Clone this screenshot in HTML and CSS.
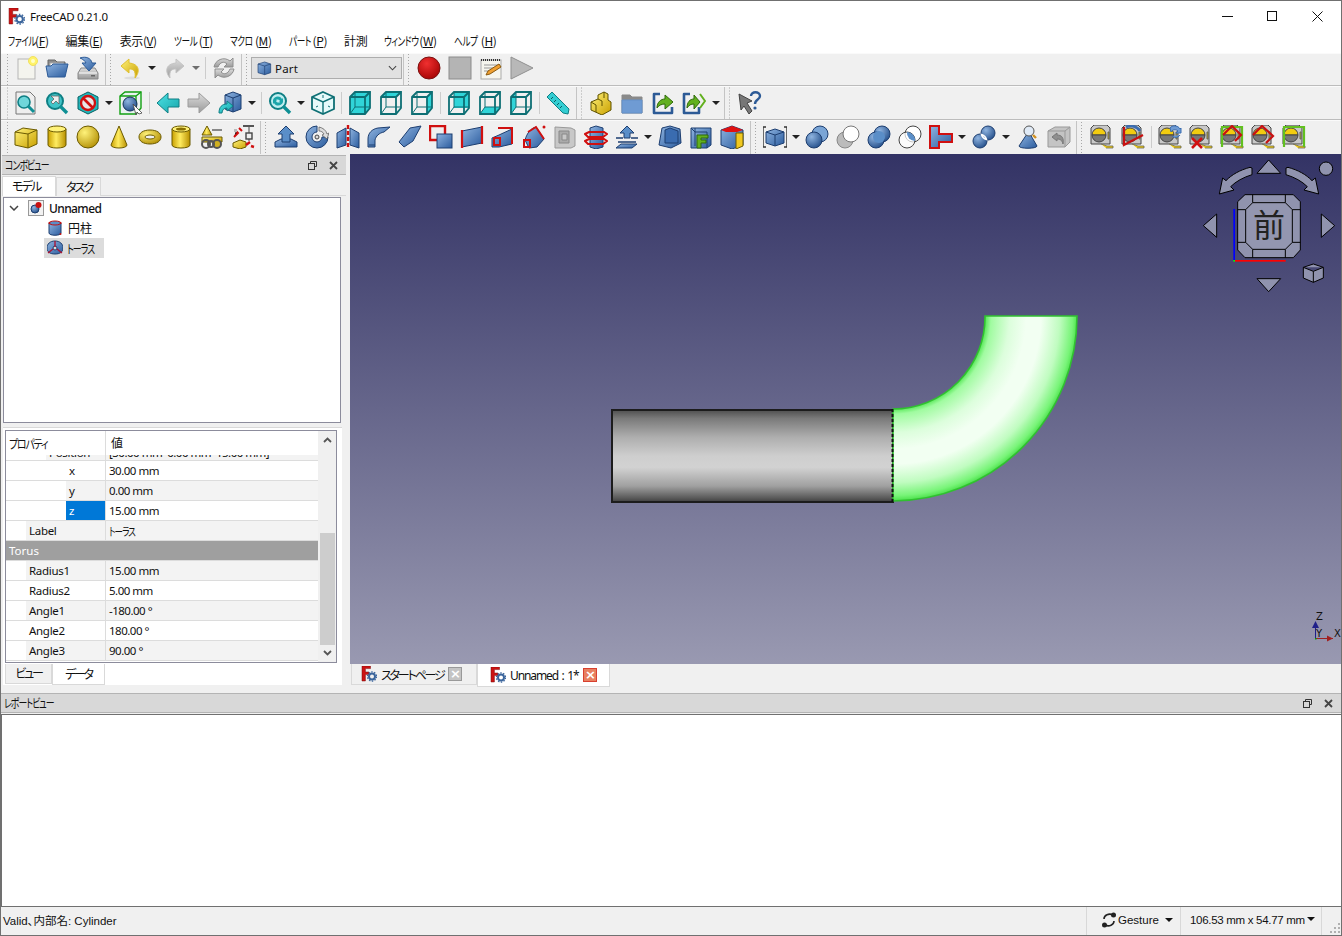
FILE: index.html
```html
<!DOCTYPE html>
<html lang="ja">
<head>
<meta charset="utf-8">
<title>FreeCAD 0.21.0</title>
<link rel="stylesheet" href="styles.css">
</head>
<body>
<svg class="defs" width="0" height="0" aria-hidden="true">
<defs>
<linearGradient id="y" x1="0" y1="0" x2="1" y2="1"><stop offset="0" stop-color="#fff27a"/><stop offset="1" stop-color="#c9a000"/></linearGradient>
<linearGradient id="yc" x1="0" y1="0" x2="1" y2="0"><stop offset="0" stop-color="#c9a000"/><stop offset=".45" stop-color="#ffec60"/><stop offset="1" stop-color="#b89000"/></linearGradient>
<linearGradient id="b" x1="0" y1="0" x2="1" y2="1"><stop offset="0" stop-color="#8fb4e0"/><stop offset="1" stop-color="#2b5c9e"/></linearGradient>
<linearGradient id="t" x1="0" y1="0" x2="1" y2="1"><stop offset="0" stop-color="#4fe3e6"/><stop offset="1" stop-color="#16a5aa"/></linearGradient>
<linearGradient id="g" x1="0" y1="0" x2="0" y2="1"><stop offset="0" stop-color="#dcdcdc"/><stop offset="1" stop-color="#9a9a9a"/></linearGradient>
<radialGradient id="rs" cx=".35" cy=".3" r=".8"><stop offset="0" stop-color="#fff27a"/><stop offset="1" stop-color="#b08c00"/></radialGradient>
<radialGradient id="rr" cx=".4" cy=".3" r=".8"><stop offset="0" stop-color="#f03030"/><stop offset="1" stop-color="#a00000"/></radialGradient>
<radialGradient id="rb" cx=".35" cy=".3" r=".8"><stop offset="0" stop-color="#8fb4e0"/><stop offset="1" stop-color="#1f4a86"/></radialGradient>
<linearGradient id="cyl" gradientUnits="userSpaceOnUse" x1="0" y1="409" x2="0" y2="503"><stop offset="0" stop-color="#4a4a4a"/><stop offset=".1" stop-color="#7a7a7a"/><stop offset=".3" stop-color="#aeaeae"/><stop offset=".5" stop-color="#cecece"/><stop offset=".62" stop-color="#d2d2d2"/><stop offset=".82" stop-color="#a0a0a0"/><stop offset=".95" stop-color="#585858"/><stop offset="1" stop-color="#383838"/></linearGradient>
<radialGradient id="tor" gradientUnits="userSpaceOnUse" cx="893" cy="316" r="185"><stop offset=".5" stop-color="#58e858"/><stop offset=".53" stop-color="#a0fba0"/><stop offset=".63" stop-color="#dcfedc"/><stop offset=".72" stop-color="#f2fff2"/><stop offset=".8" stop-color="#f2fff2"/><stop offset=".9" stop-color="#c0fcc0"/><stop offset=".97" stop-color="#78f478"/><stop offset="1" stop-color="#48e048"/></radialGradient>

<symbol id="new" viewBox="0 0 24 24"><rect x="4" y="3" width="17" height="20" fill="#f4f4ee" stroke="#b5b5b5"/><circle cx="19" cy="5" r="4.5" fill="#fff36a" stroke="#f0e060"/><circle cx="19" cy="5" r="2" fill="#ffffc8"/></symbol>
<symbol id="open" viewBox="0 0 24 24"><path d="M3 4h7l2 2h8v6H3z" fill="#8d8d8d" stroke="#666"/><path d="M5 7h14v7H5z" fill="#fff" stroke="#aaa"/><path d="M3 21 1 10h5l2-2h15l-3 13z" fill="url(#b)" stroke="#2c5a96"/></symbol>
<symbol id="save" viewBox="0 0 24 24"><path d="M5 12h14l3 5v6H2v-6z" fill="url(#g)" stroke="#888"/><path d="M3 17h18" stroke="#fff"/><rect x="15" y="19" width="4" height="1.5" fill="#666"/><path d="M4 2c6-2 11 0 12 5h4l-7 8-7-8h4c-1-2-3-4-6-5z" fill="url(#b)" stroke="#2c5a96"/></symbol>
<symbol id="undo" viewBox="0 0 24 24"><ellipse cx="13" cy="22" rx="8" ry="1.5" fill="#ddd"/><path d="M10 3 2 10l8 7v-4c4 0 7 1 6 9 5-6 5-14-6-15z" fill="url(#y)" stroke="#e0c030"/></symbol>
<symbol id="redo" viewBox="0 0 24 24"><path d="M14 3 22 10l-8 7v-4c-4 0-7 1-6 9-5-6-5-14 6-15z" fill="url(#g)" stroke="#c4c4c4"/></symbol>
<symbol id="refresh" viewBox="0 0 24 24"><path d="M2 11C3 4 12 0 18 5l3-3v9h-9l3-3c-3-3-7-2-9 3z" fill="url(#g)" stroke="#8e8e8e"/><path d="M22 13c-1 7-10 11-16 6l-3 3v-9h9l-3 3c3 3 7 2 9-3z" fill="url(#g)" stroke="#8e8e8e"/></symbol>
<symbol id="rec" viewBox="0 0 24 24"><circle cx="12" cy="12" r="11" fill="url(#rr)" stroke="#7a1010"/></symbol>
<symbol id="stop" viewBox="0 0 24 24"><rect x="1" y="1" width="22" height="22" fill="#b4b4b4" stroke="#8c8c8c"/></symbol>
<symbol id="edit" viewBox="0 0 24 24"><rect x="2" y="4" width="20" height="19" fill="#f6f6ee" stroke="#aaa"/><path d="M2 4h20" stroke="#333" stroke-width="2" stroke-dasharray="1 1"/><path d="M5 9h14M5 12h9M5 15h6" stroke="#999"/><path d="m7 19 2-4L20 8l2 3-11 7z" fill="#f0a030" stroke="#8a5a10"/></symbol>
<symbol id="play" viewBox="0 0 24 24"><path d="M1 1 23 12 1 23z" fill="#b8b8b8" stroke="#909090"/></symbol>
<symbol id="part" viewBox="0 0 24 24"><path d="M3 6 13 3l9 3v13l-9 3-10-3z" fill="url(#b)" stroke="#1d3e70"/><path d="M3 6l10 3 9-3M13 9v13" fill="none" stroke="#1d3e70"/></symbol>

<symbol id="fitall" viewBox="0 0 24 24"><path d="M2 1h14l5 5v17H2z" fill="#eee" stroke="#777"/><circle cx="10" cy="11" r="6" fill="#6fd6da" stroke="#0e7f84" stroke-width="1.6"/><path d="m14 15 6 6" stroke="#0e8f94" stroke-width="3"/></symbol>
<symbol id="fitsel" viewBox="0 0 24 24"><circle cx="10" cy="10" r="8" fill="#40c4c8" stroke="#0e7f84" stroke-width="2"/><path d="m15 15 7 7" stroke="#0e8f94" stroke-width="3.4"/><path d="M6 5h8v8l-3-3-3 3-2-2 3-3z" fill="#eee" stroke="#555" stroke-width=".7"/></symbol>
<symbol id="draw" viewBox="0 0 24 24"><path d="M12 1 22 6v12l-10 5-10-5V6z" fill="#20b8bc" stroke="#0b5f62"/><circle cx="12" cy="12" r="7" fill="#e8e8e8" stroke="#d01010" stroke-width="2.4"/><path d="m7 7 10 10" stroke="#d01010" stroke-width="2.6"/></symbol>
<symbol id="bbox" viewBox="0 0 24 24"><path d="M1 5 6 1h16v16l-5 6H1z" fill="#cfe" fill-opacity=".2" stroke="#12a012" stroke-width="1.4"/><path d="M1 5h16v18M17 5l5-4" fill="none" stroke="#12a012" stroke-width="1.4"/><circle cx="11" cy="13" r="7" fill="url(#rb)" stroke="#16305a"/><path d="m14 13 9 9-3 1-2-2-1 3z" fill="#fff" stroke="#444" stroke-width=".8"/></symbol>
<symbol id="back" viewBox="0 0 24 24"><path d="M1 12 12 2v6h11v8H12v6z" fill="url(#t)" stroke="#0e7f84"/></symbol>
<symbol id="fwd" viewBox="0 0 24 24"><path d="M23 12 12 2v6H1v8h11v6z" fill="url(#g)" stroke="#9c9c9c"/></symbol>
<symbol id="boxarrow" viewBox="0 0 24 24"><path d="M7 4 15 1l8 3v14l-8 3-8-3z" fill="url(#b)" stroke="#1d3e70"/><path d="m7 4 8 3 8-3M15 7v14" fill="none" stroke="#1d3e70"/><path d="M1 22c0-6 3-9 8-9v-3l6 5-6 5v-3c-3 0-5 2-5 5z" fill="url(#t)" stroke="#0e7f84"/></symbol>
<symbol id="sync" viewBox="0 0 24 24"><circle cx="10" cy="10" r="8" fill="#bfeef0" stroke="#0e7f84" stroke-width="2"/><path d="m15 15 7 7" stroke="#0e8f94" stroke-width="3.4"/><path d="M5 9c1-4 7-5 9-1l1-1v4h-4l1-1c-1-2-4-2-5 0zM15 11c-1 4-7 5-9 1l-1 1V9h4l-1 1c1 2 4 2 5 0z" fill="#1ba5aa"/></symbol>
<symbol id="iso" viewBox="0 0 24 24"><path d="M12 1 23 6v12l-11 5-11-5V6z" fill="#e6fafa" stroke="#0e6f74" stroke-width="1.8"/><path d="m1 6 11 5 11-5M12 11v12" fill="none" stroke="#0e6f74" stroke-width="1.4"/><path d="M12 4v3M5 16l2-1M19 16l-2-1" stroke="#0e6f74"/></symbol>
<g id="wire"><path d="M2 6 7 1h15v16l-5 6H2z" fill="none" stroke="#0e6f74" stroke-width="1.8"/><path d="M2 6h15v17M17 6l5-5" fill="none" stroke="#0e6f74" stroke-width="1.8"/><path d="M7 1v15H22M7 16l-5 7" fill="none" stroke="#0e6f74"/></g>
<symbol id="vfront" viewBox="0 0 24 24"><path d="M2 6 7 1h15v16l-5 6H2z" fill="#30d4d8"/><use href="#wire"/></symbol>
<symbol id="vtop" viewBox="0 0 24 24"><path d="M2 6 7 1h15l-5 5z" fill="#30d4d8"/><use href="#wire"/></symbol>
<symbol id="vright" viewBox="0 0 24 24"><path d="M17 6l5-5v16l-5 6z" fill="#30d4d8"/><use href="#wire"/></symbol>
<symbol id="vrear" viewBox="0 0 24 24"><path d="M7 1h15v16H7z" fill="#30d4d8"/><use href="#wire"/></symbol>
<symbol id="vbottom" viewBox="0 0 24 24"><path d="M7 16h15l-5 7H2z" fill="#30d4d8"/><use href="#wire"/></symbol>
<symbol id="vleft" viewBox="0 0 24 24"><path d="M2 6 7 1v15l-5 7z" fill="#30d4d8"/><use href="#wire"/></symbol>
<symbol id="ruler" viewBox="0 0 24 24"><path d="M1 6 6 1l17 17-1 5-5-1z" fill="#33cdd2" stroke="#0e7f84"/><path d="m5 8 2-2M8 11l2-2M11 14l2-2M14 17l2-2" stroke="#0b5f62"/></symbol>
<symbol id="stairs" viewBox="0 0 24 24"><path d="M2 11 9 8V4l6-3 4 2v6l3 2v8l-9 5-11-5z" fill="url(#y)" stroke="#5f5200"/><path d="m2 11 5 3v7M9 8l4 2v5M15 1v6" fill="none" stroke="#5f5200"/></symbol>
<symbol id="folder" viewBox="0 0 24 24"><path d="M2 4h8l2 2h10v16H2z" fill="#8a8a8a" stroke="#888"/><path d="M2 9h20v13H2z" fill="#6f9bd3" stroke="#6590c8"/></symbol>
<symbol id="link" viewBox="0 0 24 24"><path d="M9 3H3v19h18v-6" fill="none" stroke="#2c5a96" stroke-width="2.6" stroke-linejoin="round"/><path d="M6 17c0-6 4-9 8-9V4l8 7-8 7v-5c-3 0-6 1-8 4z" fill="#62b01e" stroke="#2f6a0a"/></symbol>
<symbol id="linksub" viewBox="0 0 24 24"><path d="M8 3H2v19h15v-6" fill="none" stroke="#2c5a96" stroke-width="2.6" stroke-linejoin="round"/><path d="M5 17c0-6 3-9 7-9V4l6 7-6 7v-5c-3 0-5 1-7 4z" fill="#62b01e" stroke="#2f6a0a"/><path d="m18 3 5 7-5 7" fill="none" stroke="#62b01e" stroke-width="2"/></symbol>
<symbol id="help" viewBox="0 0 24 24"><path d="M1 3 14 10l-5 2 5 8-3 3-5-8-3 4z" fill="#777" stroke="#444"/><path d="M13 5c0-5 9-5 9 0 0 4-5 3-5 8" fill="none" stroke="#2c5a96" stroke-width="2.4"/><circle cx="17" cy="17" r="1.6" fill="#2c5a96"/></symbol>

<symbol id="ycube" viewBox="0 0 24 24"><path d="M1 7 9 3l14 2v14l-9 4-13-3z" fill="url(#y)" stroke="#6b5a00"/><path d="m1 7 13 2 9-4M14 9v14" fill="none" stroke="#6b5a00"/></symbol>
<symbol id="ycyl" viewBox="0 0 24 24"><path d="M3 4v16c0 4 18 4 18 0V4z" fill="url(#yc)" stroke="#6b5a00"/><ellipse cx="12" cy="4" rx="9" ry="3" fill="#fff27a" stroke="#6b5a00"/></symbol>
<symbol id="ysph" viewBox="0 0 24 24"><circle cx="12" cy="12" r="11" fill="url(#rs)" stroke="#6b5a00"/></symbol>
<symbol id="ycone" viewBox="0 0 24 24"><path d="M12 1 20 20c0 4-16 4-16 0z" fill="url(#yc)" stroke="#6b5a00"/></symbol>
<symbol id="ytor" viewBox="0 0 24 24"><path fill-rule="evenodd" d="M12 5c7 0 11 3 11 7s-4 7-11 7S1 16 1 12s4-7 11-7zm0 5c-3 0-5 1-5 2s2 2 5 2 5-1 5-2-2-2-5-2z" fill="url(#rs)" stroke="#6b5a00"/></symbol>
<symbol id="ytube" viewBox="0 0 24 24"><path d="M3 4v16c0 4 18 4 18 0V4z" fill="url(#yc)" stroke="#6b5a00"/><ellipse cx="12" cy="4" rx="9" ry="3" fill="#fff27a" stroke="#6b5a00"/><ellipse cx="12" cy="4" rx="5" ry="1.5" fill="#8a7000"/></symbol>
<symbol id="prims" viewBox="0 0 24 24"><path d="M7 1 12 10H2z" fill="url(#yc)" stroke="#6b5a00"/><path d="M12 5h10" stroke="#888" stroke-width="2"/><path d="M2 12h20v5H2z" fill="url(#y)" stroke="#6b5a00"/><circle cx="6" cy="19" r="4" fill="none" stroke="#555" stroke-width="2"/><circle cx="17" cy="19" r="4" fill="#d0b020" stroke="#555" stroke-width="2"/><circle cx="11" cy="19" r="3" fill="none" stroke="#555" stroke-width="2"/></symbol>
<symbol id="builder" viewBox="0 0 24 24"><path d="M12 1h11" stroke="#555" stroke-width="2"/><rect x="15" y="8" width="6" height="6" fill="#eee" stroke="#444" stroke-width="1.4"/><path d="M18 2v6M18 14v2" stroke="#444"/><path d="m3 12 4-4-2-2M8 3l3 3" stroke="#d01010" stroke-width="2"/><path d="M2 18 9 15l6 2v5l-6 2-7-2z" fill="url(#y)" stroke="#6b5a00"/><path d="m15 20 4-3M20 21l3 1" stroke="#d01010" stroke-width="2.4"/><rect x="3" y="4" width="3" height="3" fill="#bbb"/></symbol>

<symbol id="extrude" viewBox="0 0 24 24"><path d="M1 17 7 14h10l6 3v5H1z" fill="url(#b)" stroke="#1d3e70"/><path d="M12 1 20 9h-4v8H8V9H4z" fill="#5a8ec8" stroke="#1d3e70"/></symbol>
<symbol id="revolve" viewBox="0 0 24 24"><path fill-rule="evenodd" d="M12 1a11 11 0 1 0 11 11h-6a5 5 0 1 1-5-5z" fill="url(#b)" stroke="#1d3e70"/><path d="M14 2c4 1 7 3 8 7l2-1-2 6-5-4 2-1c-1-2-3-3-5-3z" fill="#ddd" stroke="#555" stroke-width=".7"/><circle cx="12" cy="12" r="2" fill="#ddd" stroke="#444"/></symbol>
<symbol id="mirror" viewBox="0 0 24 24"><path d="M1 8 10 3v17l-9 3z" fill="url(#b)" stroke="#1d3e70"/><path d="M23 8 14 3v17l9 3z" fill="url(#b)" stroke="#1d3e70"/><path d="M12 0v24" stroke="#d01010" stroke-width="2.4" stroke-dasharray="4 2"/></symbol>
<symbol id="fillet" viewBox="0 0 24 24"><path d="M1 22V14C1 8 5 4 11 3l12-1-6 5c-5 1-8 4-9 8v7z" fill="url(#b)" stroke="#1d3e70"/><path d="M2 20h6" stroke="#1d3e70"/></symbol>
<symbol id="chamfer" viewBox="0 0 24 24"><path d="M1 17 12 3l11-2-8 15L6 22z" fill="url(#b)" stroke="#1d3e70"/><path d="M1 17 6 22" stroke="#1d3e70"/></symbol>
<symbol id="face" viewBox="0 0 24 24"><path d="M1 1h15v14H1z" fill="none" stroke="#d01010" stroke-width="2.4"/><rect x="8" y="9" width="15" height="14" fill="url(#b)" stroke="#1d3e70"/></symbol>
<symbol id="ruled" viewBox="0 0 24 24"><path d="M2 6 22 2v16L2 22z" fill="url(#b)" stroke="#1d3e70"/><path d="M2 5v18M22 1v18" stroke="#d01010" stroke-width="2.2"/></symbol>
<symbol id="loft" viewBox="0 0 24 24"><path d="M1 13 8 10l13-6v15L8 22H1z" fill="url(#b)" stroke="#1d3e70"/><path d="M7 3h14v16" fill="none" stroke="#d01010" stroke-width="2"/><rect x="3" y="13" width="6" height="7" fill="none" stroke="#d01010" stroke-width="2"/></symbol>
<symbol id="sweep" viewBox="0 0 24 24"><path d="M3 15C5 8 9 3 14 2l8 12-7 8-8 1z" fill="url(#b)" stroke="#1d3e70"/><path d="M6 7 14 2l8 12" fill="none" stroke="#d01010" stroke-width="2"/><rect x="2" y="15" width="6" height="7" fill="none" stroke="#d01010" stroke-width="2"/><circle cx="22" cy="2" r="1.5" fill="#d01010"/></symbol>
<symbol id="offset" viewBox="0 0 24 24"><path d="M2 2 18 3l4 2v16l-4 2H2z" fill="#c8c8c8" stroke="#999"/><path d="M6 6h10v12H6z" fill="#aaa" stroke="#888"/><path d="M9 9h5v6H9z" fill="#c8c8c8" stroke="#888"/></symbol>
<symbol id="section" viewBox="0 0 24 24"><path d="M6 3 12 1l7 2v19l-7 2-6-2z" fill="url(#b)" stroke="#1d3e70"/><path d="M1 9 5 7h15l3 2-4 3H4zM1 16l4-2h15l3 2-4 3H4z" fill="none" stroke="#d01010" stroke-width="2"/></symbol>
<symbol id="cross" viewBox="0 0 24 24"><path d="M12 1 19 8h-4v5H9V8H5z" fill="#5a8ec8" stroke="#1d3e70"/><path d="M1 13h7M16 13h7M3 17h18" stroke="#1d3e70" stroke-width="1.4"/><path d="M6 19h16l-5 4H1z" fill="url(#b)" stroke="#1d3e70"/></symbol>
<symbol id="thick" viewBox="0 0 24 24"><path d="M4 3 12 1l10 3 1 14-10 5-12-3z" fill="url(#b)" stroke="#1d3e70"/><path d="M7 5 12 3l8 3v12H7z" fill="#3a6cb0" stroke="#1d3e70"/></symbol>
<symbol id="shell" viewBox="0 0 24 24"><path d="M2 3h20v17l-4 3H2z" fill="url(#b)" stroke="#1d3e70"/><path d="M6 3v18M18 7v16M2 3l4 4h12" fill="none" stroke="#1d3e70"/><path d="M8 10h11v3h-7v2h5v3h-5v5H8z" fill="#62b01e" stroke="#2f6a0a"/></symbol>
<symbol id="colorbox" viewBox="0 0 24 24"><path d="M1 5 12 1l11 4v15l-11 4-11-4z" fill="url(#b)" stroke="#1d3e70"/><path d="M1 5 12 1l11 4-6 2H6z" fill="#e01010"/><path d="M16 8h7v13l-7 3z" fill="#f0c820" stroke="#6b5a00"/></symbol>
<symbol id="select" viewBox="0 0 24 24"><path d="M3 2H0v20h3M21 2h3v20h-3" fill="none" stroke="#333" stroke-width="1.4"/><path d="M3 7l9-3 9 3v11l-9 3-9-3z" fill="url(#b)" stroke="#1d3e70"/><path d="m3 7 9 3 9-3M12 10v11" fill="none" stroke="#1d3e70"/></symbol>
<symbol id="bfuse" viewBox="0 0 24 24"><circle cx="15" cy="9" r="8" fill="#7aa5d6" stroke="#1d3e70"/><circle cx="9" cy="15" r="8" fill="url(#rb)" stroke="#1d3e70"/></symbol>
<symbol id="bcut" viewBox="0 0 24 24"><circle cx="9" cy="15" r="8" fill="#bbb" stroke="#888"/><circle cx="15" cy="9" r="8" fill="#fff" stroke="#777"/></symbol>
<symbol id="bunion" viewBox="0 0 24 24"><circle cx="15" cy="9" r="8" fill="url(#rb)" stroke="#1d3e70"/><circle cx="9" cy="15" r="8" fill="url(#rb)" stroke="#1d3e70"/><circle cx="12" cy="12" r="6" fill="#5a8ec8"/></symbol>
<symbol id="bcommon" viewBox="0 0 24 24"><circle cx="15" cy="9" r="8" fill="#fff" stroke="#444"/><circle cx="9" cy="15" r="8" fill="#fff" fill-opacity=".7" stroke="#444"/><path d="M9 7a8 8 0 0 1 8 9A8 8 0 0 1 9 7z" fill="#5a8ec8"/></symbol>
<symbol id="tee" viewBox="0 0 24 24"><path d="M1 1h9v8h13v8H10v6H1z" fill="url(#b)" stroke="#d01010" stroke-width="2"/></symbol>
<symbol id="slice" viewBox="0 0 24 24"><circle cx="16" cy="8" r="7" fill="url(#rb)" stroke="#1d3e70"/><circle cx="8" cy="16" r="7" fill="url(#rb)" stroke="#1d3e70"/><path d="M9.500 9.500a7 7 0 0 1 5 5 7 7 0 0 1-5-5z" fill="#6f9bd3" stroke="#fff" stroke-width="1.500"/></symbol>
<symbol id="checkg" viewBox="0 0 24 24"><path d="M11 9 3 21c0 3 18 3 18 0L14 9z" fill="url(#b)" stroke="#1d3e70"/><circle cx="13" cy="6" r="5" fill="#e0eaf6" stroke="#555"/><path d="m17 10 3 3" stroke="#d09020" stroke-width="2.4"/></symbol>
<symbol id="defeat" viewBox="0 0 24 24"><path d="M1 6 8 2h15v15l-5 5H1z" fill="#c4c4c4" stroke="#999"/><path d="M1 6h17v16M18 6l5-4" fill="none" stroke="#999"/><path d="M5 12 10 8v2c5 0 7 3 6 9-1-4-3-5-6-5v2z" fill="#8f8f8f" stroke="#777"/></symbol>
<g id="tape"><path d="M1 3 4 0h13l3 3v16H1z" fill="#c8c8c8" stroke="#444"/><path d="M2 10a7 7 0 0 1 14 0z" fill="#f2cc10" stroke="#444"/><path d="M2 10a7 7 0 0 0 14 0z" fill="#777" stroke="#444"/><path d="M18 7h1v7h-1z" fill="#f2cc10" stroke="#665"/><path d="M11 19l6 2h6v2h-7" fill="#f2cc10" stroke="#665" stroke-width=".8"/></g>
<symbol id="m1" viewBox="0 0 24 24"><use href="#tape"/></symbol>
<symbol id="m2" viewBox="0 0 24 24"><use href="#tape"/><path d="M3 2v18L22 10" fill="none" stroke="#c81010" stroke-width="2.2"/><path d="M5 2c5-2 11-1 14 4" fill="none" stroke="#3a6cb0" stroke-width="2.6"/></symbol>
<symbol id="m3" viewBox="0 0 24 24"><use href="#tape"/><path d="M12 3c2-3 8-3 10 1l1-1v5h-5l2-2c-2-2-5-2-7 1zM22 10c-2 3-6 3-8 1" fill="#6f9bd3" stroke="#3a6cb0"/></symbol>
<symbol id="m4" viewBox="0 0 24 24"><use href="#tape"/><path d="m3 13 10 10M13 13 3 23" stroke="#d01010" stroke-width="2.6"/></symbol>
<symbol id="m5" viewBox="0 0 24 24"><use href="#tape"/><path d="M2 22V2h20v20" fill="none" stroke="#62c020" stroke-width="2.2"/><path d="M3 10 12 1l9 9-6 6" fill="none" stroke="#c81010" stroke-width="2.2"/></symbol>
<symbol id="m6" viewBox="0 0 24 24"><use href="#tape"/><path d="M2 10 11 1l11 10-7 7" fill="none" stroke="#c81010" stroke-width="2.2"/></symbol>
<symbol id="m7" viewBox="0 0 24 24"><use href="#tape"/><path d="M2 22V2h20v20" fill="none" stroke="#62c020" stroke-width="2.2"/></symbol>
<symbol id="logo" viewBox="0 0 16 16"><path d="M1 0h8.500v2.600H4.400V6H8v2.600H4.400V15H1z" fill="#cc1414" stroke="#7a0a0a" stroke-width=".5"/><circle cx="11" cy="10.500" r="3" fill="none" stroke="#3b659c" stroke-width="2"/><circle cx="11" cy="10.500" r="4.600" fill="none" stroke="#3b659c" stroke-width="1.200" stroke-dasharray="1.500 1.400"/></symbol>
<symbol id="cyl3" viewBox="0 0 16 16"><path d="M2 3v10c0 3 12 3 12 0V3z" fill="url(#b)" stroke="#1d3e70"/><ellipse cx="8" cy="3" rx="6" ry="2" fill="#5a8ec8" stroke="#c01010"/><circle cx="2.500" cy="3" r="1" fill="#c01010"/><circle cx="13.500" cy="3" r="1" fill="#c01010"/><circle cx="13.500" cy="14" r="1" fill="#c01010"/></symbol>
<symbol id="tor3" viewBox="0 0 16 16"><path fill-rule="evenodd" d="M8 1c5 0 8 3 8 7s-3 6-8 6-8-2-8-6 3-7 8-7zm0 5a2 2 0 1 0 0 4 2 2 0 0 0 0-4z" fill="url(#b)" stroke="#1d3e70"/><path d="M8 1v6M1 13l5-4M15 13l-5-4" stroke="#b01030" stroke-width="1.300"/></symbol>
<symbol id="doc" viewBox="0 0 16 16"><rect x=".5" y=".5" width="15" height="15" fill="#f2f2f2" stroke="#999"/><circle cx="7" cy="9" r="4" fill="url(#rb)" stroke="#1d3e70"/><circle cx="10.500" cy="5" r="3" fill="#c81010"/></symbol>
<symbol id="restore" viewBox="0 0 9 9"><path d="M2.500 2.500V.5h6v5H6.500" fill="none" stroke="#333"/><rect x=".5" y="2.500" width="6" height="6" fill="none" stroke="#333"/></symbol>
<symbol id="closex" viewBox="0 0 9 9"><path d="m1 1 7 7M8 1 1 8" stroke="#444" stroke-width="1.800"/></symbol>
<symbol id="gesture" viewBox="0 0 16 16"><path d="M3 7c0-4 5-6 9-4" fill="none" stroke="#222" stroke-width="1.600"/><circle cx="12.500" cy="3" r="2.500" fill="#222"/><path d="M13 9c0 4-5 6-9 4" fill="none" stroke="#222" stroke-width="1.600"/><circle cx="3.500" cy="13" r="2.500" fill="#222"/></symbol>
</defs>
</svg>

<div class="window">
  <header class="titlebar">
    <svg class="logo"><use href="#logo"/></svg>
    <span class="apptitle">FreeCAD 0.21.0</span>
    <span class="winbtns">
      <span class="wb wb-min"></span>
      <span class="wb wb-max"></span>
      <svg class="wb-close" viewBox="0 0 11 11"><path d="m.5.5 10 10M10.500.5l-10 10" stroke="#111" fill="none"/></svg>
    </span>
  </header>
  <nav class="menubar">
    <span class="m"><span class="mk w27">ファイル</span>(<u>F</u>)</span>
    <span class="m">編集(<u>E</u>)</span>
    <span class="m">表示(<u>V</u>)</span>
    <span class="m"><span class="mk w25">ツール</span>(<u>T</u>)</span>
    <span class="m"><span class="mk w25">マクロ</span>(<u>M</u>)</span>
    <span class="m"><span class="mk w24">パート</span>(<u>P</u>)</span>
    <span class="m">計測</span>
    <span class="m"><span class="mk w35">ウィンドウ</span>(<u>W</u>)</span>
    <span class="m"><span class="mk w27">ヘルプ</span>(<u>H</u>)</span>
  </nav>

  <div class="tbar tbar-1">
    <div class="tgroup first">
      <span class="tool"><svg class="ic"><use href="#new"/></svg></span>
      <span class="tool"><svg class="ic"><use href="#open"/></svg></span>
      <span class="tool"><svg class="ic"><use href="#save"/></svg></span>
    </div>
    <div class="tgroup">
      <span class="tool"><svg class="ic"><use href="#undo"/></svg></span><span class="drop"></span>
      <span class="tool"><svg class="ic"><use href="#redo"/></svg></span><span class="drop dis"></span>
      <span class="tsep"></span>
      <span class="tool"><svg class="ic"><use href="#refresh"/></svg></span>
    </div>
    <div class="tgroup wb-group">
      <div class="combo"><svg class="cicon"><use href="#part"/></svg><span class="ctext">Part</span><svg class="chev" viewBox="0 0 10 6"><path d="m1 1 4 4 4-4" fill="none" stroke="#444" stroke-width="1.200"/></svg></div>
    </div>
    <div class="tgroup last">
      <span class="tool"><svg class="ic"><use href="#rec"/></svg></span>
      <span class="tool"><svg class="ic"><use href="#stop"/></svg></span>
      <span class="tool"><svg class="ic"><use href="#edit"/></svg></span>
      <span class="tool"><svg class="ic"><use href="#play"/></svg></span>
    </div>
  </div>

  <div class="tbar tbar-2">
    <div class="tgroup first">
      <span class="tool"><svg class="ic"><use href="#fitall"/></svg></span>
      <span class="tool"><svg class="ic"><use href="#fitsel"/></svg></span>
      <span class="tool"><svg class="ic"><use href="#draw"/></svg></span><span class="drop"></span>
      <span class="tool"><svg class="ic"><use href="#bbox"/></svg></span>
      <span class="tsep"></span>
      <span class="tool"><svg class="ic"><use href="#back"/></svg></span>
      <span class="tool"><svg class="ic"><use href="#fwd"/></svg></span>
      <span class="tool"><svg class="ic"><use href="#boxarrow"/></svg></span><span class="drop"></span>
      <span class="tsep"></span>
      <span class="tool"><svg class="ic"><use href="#sync"/></svg></span><span class="drop"></span>
      <span class="tool"><svg class="ic"><use href="#iso"/></svg></span>
      <span class="tsep"></span>
      <span class="tool"><svg class="ic"><use href="#vfront"/></svg></span>
      <span class="tool"><svg class="ic"><use href="#vtop"/></svg></span>
      <span class="tool"><svg class="ic"><use href="#vright"/></svg></span>
      <span class="tsep"></span>
      <span class="tool"><svg class="ic"><use href="#vrear"/></svg></span>
      <span class="tool"><svg class="ic"><use href="#vbottom"/></svg></span>
      <span class="tool"><svg class="ic"><use href="#vleft"/></svg></span>
      <span class="tsep"></span>
      <span class="tool"><svg class="ic"><use href="#ruler"/></svg></span>
    </div>
    <div class="tgroup">
      <span class="tool"><svg class="ic"><use href="#stairs"/></svg></span>
      <span class="tool"><svg class="ic"><use href="#folder"/></svg></span>
      <span class="tool"><svg class="ic"><use href="#link"/></svg></span>
      <span class="tool"><svg class="ic"><use href="#linksub"/></svg></span><span class="drop"></span>
    </div>
    <div class="tgroup last">
      <span class="tool"><svg class="ic"><use href="#help"/></svg></span>
    </div>
  </div>

  <div class="tbar tbar-3">
    <div class="tgroup first">
      <span class="tool"><svg class="ic"><use href="#ycube"/></svg></span>
      <span class="tool"><svg class="ic"><use href="#ycyl"/></svg></span>
      <span class="tool"><svg class="ic"><use href="#ysph"/></svg></span>
      <span class="tool"><svg class="ic"><use href="#ycone"/></svg></span>
      <span class="tool"><svg class="ic"><use href="#ytor"/></svg></span>
      <span class="tool"><svg class="ic"><use href="#ytube"/></svg></span>
      <span class="tool"><svg class="ic"><use href="#prims"/></svg></span>
      <span class="tool"><svg class="ic"><use href="#builder"/></svg></span>
    </div>
    <div class="tgroup">
      <span class="tool"><svg class="ic"><use href="#extrude"/></svg></span>
      <span class="tool"><svg class="ic"><use href="#revolve"/></svg></span>
      <span class="tool"><svg class="ic"><use href="#mirror"/></svg></span>
      <span class="tool"><svg class="ic"><use href="#fillet"/></svg></span>
      <span class="tool"><svg class="ic"><use href="#chamfer"/></svg></span>
      <span class="tool"><svg class="ic"><use href="#face"/></svg></span>
      <span class="tool"><svg class="ic"><use href="#ruled"/></svg></span>
      <span class="tool"><svg class="ic"><use href="#loft"/></svg></span>
      <span class="tool"><svg class="ic"><use href="#sweep"/></svg></span>
      <span class="tool"><svg class="ic"><use href="#offset"/></svg></span>
      <span class="tool"><svg class="ic"><use href="#section"/></svg></span>
      <span class="tool"><svg class="ic"><use href="#cross"/></svg></span><span class="drop"></span>
      <span class="tool"><svg class="ic"><use href="#thick"/></svg></span>
      <span class="tool"><svg class="ic"><use href="#shell"/></svg></span>
      <span class="tool"><svg class="ic"><use href="#colorbox"/></svg></span>
    </div>
    <div class="tgroup">
      <span class="tool"><svg class="ic"><use href="#select"/></svg></span><span class="drop narrow"></span>
      <span class="tool"><svg class="ic"><use href="#bfuse"/></svg></span>
      <span class="tool"><svg class="ic"><use href="#bcut"/></svg></span>
      <span class="tool"><svg class="ic"><use href="#bunion"/></svg></span>
      <span class="tool"><svg class="ic"><use href="#bcommon"/></svg></span>
      <span class="tool"><svg class="ic"><use href="#tee"/></svg></span><span class="drop"></span>
      <span class="tool"><svg class="ic"><use href="#slice"/></svg></span><span class="drop"></span>
      <span class="tool"><svg class="ic"><use href="#checkg"/></svg></span>
      <span class="tool"><svg class="ic"><use href="#defeat"/></svg></span>
    </div>
    <div class="tgroup last">
      <span class="tool"><svg class="ic"><use href="#m1"/></svg></span>
      <span class="tool"><svg class="ic"><use href="#m2"/></svg></span>
      <span class="tsep"></span>
      <span class="tool"><svg class="ic"><use href="#m3"/></svg></span>
      <span class="tool"><svg class="ic"><use href="#m4"/></svg></span>
      <span class="tool"><svg class="ic"><use href="#m5"/></svg></span>
      <span class="tool"><svg class="ic"><use href="#m6"/></svg></span>
      <span class="tool"><svg class="ic"><use href="#m7"/></svg></span>
    </div>
  </div>

  <main class="workarea">
    <aside class="leftdock">
      <div class="docktitle"><span class="kana sx">コンボビュー</span><span class="dockbtns"><svg class="db"><use href="#restore"/></svg><svg class="db"><use href="#closex"/></svg></span></div>
      <div class="toptabs">
        <span class="ttab active kana">モデル</span>
        <span class="ttab kana">タスク</span>
      </div>
      <div class="tree">
        <div class="tnode root"><svg class="twist" viewBox="0 0 10 6"><path d="m1 1 4 4 4-4" fill="none" stroke="#444" stroke-width="1.500"/></svg><svg class="ti"><use href="#doc"/></svg><span class="rootname">Unnamed</span></div>
        <div class="tnode child"><svg class="ti"><use href="#cyl3"/></svg><span class="cname">円柱</span></div>
        <div class="tnode child sel"><svg class="ti"><use href="#tor3"/></svg><span class="kana sx">トーラス</span></div>
      </div>
      <div class="propwrap">
        <div class="props">
          <div class="ptable">
            <div class="phead"><span class="pc1"><span class="kana sx8">プロパティ</span></span><span class="pc2">値</span></div>
            <div class="prow clip"><span class="pk ind2">Position</span><span class="pv">[30.00 mm  0.00 mm  15.00 mm]</span></div>
            <div class="prow"><span class="pk ind3">x</span><span class="pv">30.00 mm</span></div>
            <div class="prow alt"><span class="pk ind3">y</span><span class="pv">0.00 mm</span></div>
            <div class="prow"><span class="pk ind3 selk">z</span><span class="pv">15.00 mm</span></div>
            <div class="prow alt"><span class="pk ind1">Label</span><span class="pv"><span class="kana sx">トーラス</span></span></div>
            <div class="pgroup">Torus</div>
            <div class="prow alt"><span class="pk ind1">Radius1</span><span class="pv">15.00 mm</span></div>
            <div class="prow"><span class="pk ind1">Radius2</span><span class="pv">5.00 mm</span></div>
            <div class="prow alt"><span class="pk ind1">Angle1</span><span class="pv">-180.00 °</span></div>
            <div class="prow"><span class="pk ind1">Angle2</span><span class="pv">180.00 °</span></div>
            <div class="prow alt"><span class="pk ind1">Angle3</span><span class="pv">90.00 °</span></div>
          </div>
          <div class="vscroll">
            <svg class="sarrow" viewBox="0 0 9 6"><path d="m1 5 3.500-3.500L8 5" fill="none" stroke="#555" stroke-width="1.800"/></svg>
            <div class="strack"><div class="sthumb"></div></div>
            <svg class="sarrow" viewBox="0 0 9 6"><path d="m1 1 3.500 3.500L8 1" fill="none" stroke="#555" stroke-width="1.800"/></svg>
          </div>
        </div>
        <div class="btabs"><span class="btab kana">ビュー</span><span class="btab active kana">データ</span></div>
      </div>
    </aside>

    <section class="center">
      <div class="viewport">
        <svg class="scene" viewBox="350 154 991 510">
          <rect x="612" y="410" width="281" height="92" fill="url(#cyl)" stroke="#1c1c1c" stroke-width="2"/>
          <path d="M893 409A92 92 0 0 0 985 316H1077A184.500 185 0 0 1 893 501Z" fill="url(#tor)" stroke="#30c030" stroke-width="1.600"/>
          <path d="M892.500 409V502" stroke="#111" stroke-width="2" stroke-dasharray="3 2"/>
          <g transform="translate(1190 154) scale(.33333)">
            <g fill="#9093ae" stroke="#000" stroke-width="3" stroke-linejoin="round">
              <path d="M201 58 236 18 272 58Z"/>
              <path d="M201 374H272L236 413Z"/>
              <path d="M80 180 40 215 80 250Z"/>
              <path d="M394 180 434 215 394 250Z"/>
              <circle cx="408" cy="44" r="20"/>
              <path d="M186 42 180 40C150 48 125 62 108 80L98 72 88 120 132 108 122 98C138 82 160 70 186 62Z"/>
              <path d="M288 42 294 40C324 48 349 62 366 80L376 72 386 120 342 108 352 98C336 82 314 70 288 62Z"/>
              <path d="M165 122H310L331 143V288L310 311H165L143 288V143Z"/>
              <path d="M188 146H286L307 167V265L286 286H188L167 265V167Z" fill="#9396b0"/>
              <path d="M188 122V146M286 122V146M143 167H167M143 265H167M307 167H331M307 265H331M188 286V311M286 286V311" fill="none"/>
              <path d="M340 340 370 330 400 340V372L370 385 340 372ZM340 340 370 352 400 340M370 352V385"/>
            </g>
            <text class="navtext" x="237" y="248">前</text>
            <rect x="130" y="165" width="5" height="153" fill="#0000ff"/>
            <rect x="135" y="318" width="152" height="5" fill="#ff0000"/>
            <rect x="130" y="318" width="5" height="5" fill="#00ff00"/>
          </g>
          <g>
            <path d="M1315.500 638V623" stroke="#20208a" stroke-width="1"/>
            <path d="M1312 628 1315.500 621 1319 628Z" fill="#20208a"/>
            <path d="M1315 638.500H1333" stroke="#a02020" stroke-width="1"/>
            <path d="M1327 635.500 1333 638.500 1327 641.500Z" fill="#a02020"/>
            <rect x="1315" y="638" width="1.500" height="1.500" fill="#00a000"/>
            <text class="axis" x="1316" y="620">Z</text>
            <text class="axis" x="1316" y="637">Y</text>
            <text class="axis" x="1334" y="637">X</text>
          </g>
        </svg>
      </div>
      <div class="mditabs">
        <span class="mtab"><svg class="mlogo"><use href="#logo"/></svg><span class="kana mkana">スタートページ</span><span class="mclose"></span></span>
        <span class="mtab active"><svg class="mlogo"><use href="#logo"/></svg><span>Unnamed : 1*</span><span class="mclose red"></span></span>
      </div>
    </section>
  </main>

  <section class="report">
    <div class="docktitle wide"><span class="kana sx">レポートビュー</span><span class="dockbtns"><svg class="db"><use href="#restore"/></svg><svg class="db"><use href="#closex"/></svg></span></div>
    <div class="reportbody"></div>
  </section>

  <footer class="statusbar">
    <span class="smsg">Valid、内部名: Cylinder</span>
    <span class="scell gesture"><svg class="gicon"><use href="#gesture"/></svg>Gesture<span class="sdrop"></span></span>
    <span class="scell dims">106.53 mm x 54.77 mm<span class="sdrop up"></span></span>
    <span class="sgrip"><svg class="gripdots" viewBox="0 0 10 10"><g fill="#b0b0b0"><rect x="8" y="0" width="2" height="2"/><rect x="4" y="4" width="2" height="2"/><rect x="8" y="4" width="2" height="2"/><rect x="0" y="8" width="2" height="2"/><rect x="4" y="8" width="2" height="2"/><rect x="8" y="8" width="2" height="2"/></g></svg></span>
  </footer>
</div>
</body>
</html>
```
FILE: styles.css
```css
* { box-sizing: border-box; }
html, body { margin: 0; padding: 0; }
body { background: #f0f0f0; color: #111; font: 12px "Noto Sans", "Noto Sans CJK JP", sans-serif; overflow: hidden; }
.defs { display: block; height: 0; width: 0; overflow: hidden; }
u { text-decoration: underline; text-underline-offset: 1px; }
.kana { font-family: "Noto Sans CJK JP", "Noto Sans", sans-serif; font-feature-settings: "palt"; letter-spacing: -1.3px; white-space: nowrap; }
.sx { display: inline-block; transform: scaleX(.74); transform-origin: left center; }
.sx8 { display: inline-block; transform: scaleX(.82); transform-origin: left center; }

.window { width: 1342px; height: 936px; border: 1px solid #707070; display: flex; flex-direction: column; background: #f0f0f0; }

.titlebar { height: 30px; background: #fff; display: flex; align-items: center; padding-left: 7px; flex: none; }
.logo { width: 17px; height: 17px; }
.apptitle { margin-left: 5px; letter-spacing: -.3px; font-size: 11.500px; }
.winbtns { margin-left: auto; display: flex; align-items: center; }
.wb { display: block; }
.wb-min { width: 11px; height: 1px; background: #111; margin-right: 34px; }
.wb-max { width: 10px; height: 10px; border: 1px solid #111; margin-right: 35px; }
.wb-close { width: 11px; height: 11px; margin-right: 18px; display: block; }

.menubar { height: 22px; background: #fff; display: flex; align-items: center; padding: 0 0 3px 7px; flex: none; font-family: "Noto Sans CJK JP", sans-serif; font-size: 12px; gap: 17px; letter-spacing: -.4px; }
.m { white-space: nowrap; }
.mk { display: inline-block; white-space: nowrap; font-feature-settings: "palt"; letter-spacing: -.6px; transform: scaleX(.72); transform-origin: left center; }
.w24 { width: 24px; }
.w25 { width: 25px; }
.w27 { width: 27px; }
.w35 { width: 35px; }

.tbar { display: flex; flex: none; background: #f0f0f0; border-bottom: 1px solid #bcbcbc; border-top: 1px solid #fafafa; }
.tbar-1 { height: 33px; }
.tbar-1 .tgroup { padding-bottom: 3px; }
.tbar-2 { height: 34px; }
.tbar-3 { height: 34px; border-bottom: none; }
.tbar-3 .tgroup { padding-bottom: 2px; }
.tgroup { display: flex; align-items: center; padding-left: 9px; padding-right: 2px; border-right: 1px solid #c4c4c4; background-image: radial-gradient(circle, #a8a8a8 .7px, transparent .9px); background-size: 3px 3px; background-repeat: repeat-y; background-position: 3px center; }
.tgroup.first { padding-left: 9px; background-position: 5px center; }
.tgroup.last { border-right: none; }
.wb-group { padding-left: 9px; padding-right: 1px; }
.tool { width: 31px; height: 24px; display: flex; justify-content: center; flex: none; }
.ic { width: 24px; height: 24px; display: block; }
.drop { width: 12.500px; flex: none; display: flex; justify-content: center; }
.drop.narrow { width: 10.500px; }
.drop::before { content: ""; border-left: 4px solid transparent; border-right: 4px solid transparent; border-top: 4px solid #222; }
.drop.dis::before { border-top-color: #6e6e6e; }
.tsep { width: 6px; flex: none; height: 22px; background: linear-gradient(#ccc, #ccc) center / 1px 100% no-repeat; }
.combo { width: 151px; height: 22px; border: 1px solid #adadad; background: #e1e1e1; display: flex; align-items: center; padding-left: 4px; }
.cicon { width: 16px; height: 16px; }
.ctext { margin-left: 3px; letter-spacing: .2px; font-size: 11.500px; }
.chev { width: 9px; height: 6px; margin-left: auto; margin-right: 4px; }

.workarea { display: flex; flex: none; height: 539px; }
.leftdock { width: 349px; flex: none; display: flex; flex-direction: column; padding: 1px 4px 0 1px; }
.docktitle { height: 20px; background: #d8d8d8; border-top: 1px solid #b4b4b4; border-bottom: 1px solid #b4b4b4; display: flex; align-items: center; padding: 0 0 2px 3px; font-size: 12px; flex: none; }
.dockbtns { margin-left: auto; display: flex; align-items: center; gap: 12px; padding: 2px 8px 0 0; }
.db { width: 9px; height: 9px; display: block; }
.toptabs { display: flex; height: 21px; padding: 2px 0 0 0; flex: none; border-bottom: 1px solid #d9d9d9; }
.ttab { height: 19px; border: 1px solid #d9d9d9; border-bottom: none; background: #f0f0f0; padding: 0 0 2px 9px; display: flex; align-items: center; font-size: 12px; width: 45px; letter-spacing: -2px; }
.ttab.active { background: #fff; width: 54px; padding-left: 9px; height: 20px; margin-top: -1px; border-bottom: none; letter-spacing: -1.800px; }
.tree { height: 226px; margin: 1px 5px 0 1px; border: 1px solid #8c8c9c; background: #fff; flex: none; }
.tnode { height: 20px; display: flex; align-items: center; }
.root { padding-left: 5px; }
.twist { width: 10px; height: 6px; }
.ti { width: 16px; height: 16px; display: block; flex: none; }
.root .ti { margin-left: 9px; }
.rootname { margin-left: 5px; font-weight: 500; letter-spacing: -.6px; }
.child { margin-left: 40px; padding-left: 3px; width: 60px; }
.child .ti { margin-right: 4px; }
.cname { margin-left: 1px; }
.sel { background: #dcdcdc; }

.propwrap { margin: 4px 4px 0 1px; padding-top: 2px; background: #fff; border-top: 1px solid #d9d9d9; display: flex; flex-direction: column; flex: none; height: 258px; }
.props { height: 233px; margin-left: 2px; margin-right: 5px; border: 1px solid #8c8c9c; display: flex; flex: none; }
.ptable { width: 312px; overflow: hidden; flex: none; }
.phead { height: 24px; display: flex; background: #fff; align-items: center; }
.pc1 { width: 100px; padding-left: 3px; font-size: 12px; border-right: 1px solid #dcdcdc; height: 24px; display: flex; align-items: center; }
.pc2 { padding-left: 5px; }
.prow { height: 20px; display: flex; background: #fff; border-bottom: 1px solid #dcdcdc; font-size: 11.500px; letter-spacing: -.3px; }
.prow.alt { background: #f3f3f3; }
.prow.clip { height: 6px; overflow: hidden; align-items: flex-end; background: #f3f3f3; }
.prow.clip .pk, .prow.clip .pv { height: 16px; flex: none; white-space: pre; }
.prow.clip .pv { flex: 1; }
.pk { width: 100px; flex: none; display: flex; align-items: center; border-right: 1px solid #dcdcdc; }
.pv { flex: 1; padding-left: 3px; display: flex; align-items: center; letter-spacing: -.5px; }
.ind1 { padding-left: 23px; box-shadow: inset 20px 0 0 #fff; }
.ind2 { padding-left: 43px; box-shadow: inset 40px 0 0 #fff; }
.ind3 { padding-left: 63px; box-shadow: inset 60px 0 0 #fff; }
.selk { background: linear-gradient(90deg, #fff 60px, #0078d7 60px); color: #fff; box-shadow: none; }
.pgroup { height: 20px; background: #9f9f9f; color: #fff; padding-left: 3px; display: flex; align-items: center; font-size: 11.500px; border-bottom: 1px solid #dcdcdc; }
.vscroll { flex: 1; background: #f0f0f0; display: flex; flex-direction: column; align-items: center; }
.sarrow { width: 9px; height: 6px; flex: none; margin: 6px 0; display: block; }
.sarrow:last-child { margin-top: 5px; }
.strack { flex: 1; width: 100%; padding: 0 1px 0 2px; display: flex; flex-direction: column; justify-content: flex-end; }
.sthumb { height: 112px; background: #cdcdcd; }
.btabs { display: flex; height: 22px; margin-left: 2px; flex: none; }
.btab { width: 47px; height: 20px; background: #f0f0f0; border: 1px solid #d9d9d9; border-top: none; display: flex; align-items: center; justify-content: center; font-size: 12px; margin-top: 1px; letter-spacing: -2.200px; padding-bottom: 2px; }
.btab.active { background: #fff; width: 53px; height: 21px; }

.center { flex: 1; display: flex; flex-direction: column; min-width: 0; }
.viewport { height: 510px; background: linear-gradient(#333365, #9999b1); flex: none; }
.scene { display: block; width: 991px; height: 510px; }
.navtext { font: 96px "Noto Sans CJK JP", sans-serif; text-anchor: middle; fill: #222; }
.axis { font: 10px "DejaVu Sans", sans-serif; fill: #111; }
.mditabs { display: flex; padding-left: 1px; background: #f0f0f0; height: 29px; align-items: flex-start; flex: none; }
.mtab { display: flex; align-items: center; width: 126px; height: 21px; border: 1px solid #d9d9d9; border-top: none; padding-left: 9px; font-size: 12px; }
.mtab.active { background: #fff; width: 133px; height: 23px; padding-left: 12px; letter-spacing: -1.100px; word-spacing: 1.500px; }
.mkana { letter-spacing: -2.200px; }
.mlogo { width: 16px; height: 16px; margin-right: 4px; flex: none; }
.mclose { width: 14px; height: 14px; margin-left: 5px; background: #c4c4c4; border: 1px solid #999; flex: none; display: flex; align-items: center; justify-content: center; }
.mclose::before { content: "×"; display: block; color: #fff; font: bold 13px/12px "DejaVu Sans", sans-serif; letter-spacing: 0; }
.mclose.red { background: #e88060; border-color: #d84030; }

.report { flex: none; display: flex; flex-direction: column; height: 213px; }
.reportbody { flex: 1; background: #fff; border-top: 1px solid #707070; margin-top: 1px; border-left: 1px solid #707070; }

.statusbar { flex: 1; display: flex; align-items: center; border-top: 1px solid #707070; background: #f0f0f0; font: 11.500px "Liberation Sans", "Noto Sans CJK JP", sans-serif; padding-left: 2px; }
.smsg { flex: 1; padding-bottom: 3px; font-feature-settings: "palt"; }
.scell { display: flex; align-items: center; height: 28px; border-left: 1px solid #d8d8d8; white-space: nowrap; padding-bottom: 2px; }
.gesture { width: 94px; padding-left: 14px; }
.gicon { width: 16px; height: 16px; margin-right: 1px; }
.dims { width: 142px; padding-left: 9px; letter-spacing: -.3px; border-right: 1px solid #d8d8d8; }
.sdrop { margin-left: 6px; border-left: 4px solid transparent; border-right: 4px solid transparent; border-top: 4px solid #111; }
.sdrop.up { margin-left: 2px; margin-top: -2px; }
.sgrip { width: 19px; height: 28px; display: flex; align-items: flex-end; justify-content: flex-end; padding: 0 1px 2px 0; }
.gripdots { width: 10px; height: 10px; display: block; }
```
